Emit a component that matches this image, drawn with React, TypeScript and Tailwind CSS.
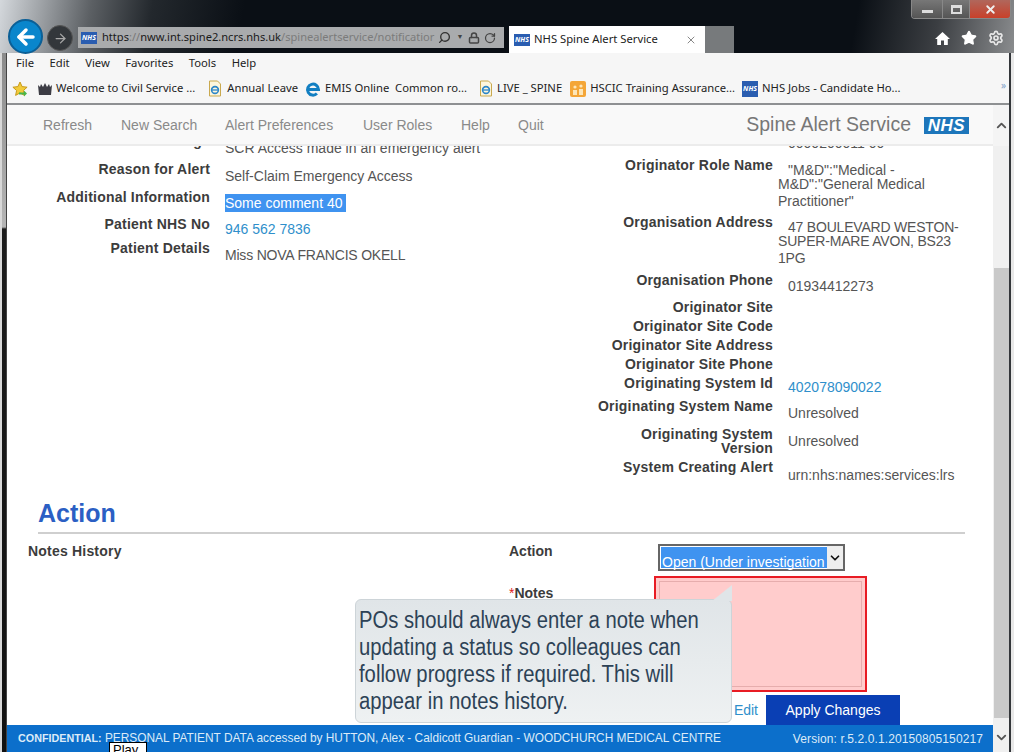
import { Star, Settings, Lock, RotateCw, Search, ChevronUp, ChevronDown, X, ArrowLeft, ArrowRight } from 'lucide-react';

const NAV = [
  { label: 'Refresh', cls: 'w-[78px]' },
  { label: 'New Search', cls: 'w-[104px]' },
  { label: 'Alert Preferences', cls: 'w-[138px]' },
  { label: 'User Roles', cls: 'w-[98px]' },
  { label: 'Help', cls: 'w-[57px]' },
  { label: 'Quit', cls: 'w-[40px]' },
];

function NhsIcon({ className }: { className: string }) {
  return (
    <span className={`flex h-[12px] items-center justify-center bg-[#2a5db0] text-[7px] font-bold italic leading-none text-white ${className}`}>
      NHS
    </span>
  );
}

function PageIcon() {
  return (
    <svg width="16" height="17" viewBox="0 0 16 17" className="shrink-0">
      <path d="M2.5 1h8l3 3v12h-11z" fill="#fdf6dc" stroke="#c9a94f" />
      <circle cx="8" cy="10" r="3.4" fill="none" stroke="#2c86c9" strokeWidth="1.6" />
      <path d="M4.5 10h7" stroke="#2c86c9" strokeWidth="1.3" />
    </svg>
  );
}

function Label({ children }: { children: React.ReactNode }) {
  return <div className="text-right text-[14px] font-bold leading-[14px] tracking-[0.2px] text-[#3c3c3c]">{children}</div>;
}

function LeftRow({ label, rowCls, valueCls, children }: { label: string; rowCls: string; valueCls: string; children: React.ReactNode }) {
  return (
    <div className={`flex ${rowCls}`}>
      <div className="w-[203px] shrink-0">
        <Label>{label}</Label>
      </div>
      <div className={`ml-[15px] text-[14px] leading-[14px] text-[#555] ${valueCls}`}>{children}</div>
    </div>
  );
}

function RightRow({ label, rowCls, valueCls, children }: { label: React.ReactNode; rowCls: string; valueCls?: string; children?: React.ReactNode }) {
  return (
    <div className={`flex ${rowCls}`}>
      <div className="w-[213px] shrink-0">
        <Label>{label}</Label>
      </div>
      <div className={`ml-[5px] w-[200px] text-[14px] leading-[14px] text-[#555] ${valueCls ?? ''}`}>{children}</div>
    </div>
  );
}

export default function App() {
  return (
    <div className="relative flex h-[752px] w-[1014px] flex-col overflow-hidden bg-white font-['Liberation_Sans',sans-serif]">
      {/* IE title bar and tabs */}
      <div className="relative flex h-[53px] shrink-0 items-end bg-[linear-gradient(100deg,#d4d8dc_0%,#a0a4a8_4%,#5c6064_9%,#23282d_15%,#0a0f15_24%,#0a0f15_84%,#3b3e42_92%,#8a8c8e_100%)] pl-[8px] font-['Noto_Sans',sans-serif]">
        <div className="mb-[-1px] flex h-[35px] w-[35px] shrink-0 items-center justify-center rounded-full border-2 border-[#0b5f96] bg-[#0a86cc]">
          <ArrowLeft size={24} strokeWidth={3.5} color="#fff" />
        </div>
        <div className="mb-[2px] ml-[4px] flex h-[26px] w-[26px] shrink-0 items-center justify-center rounded-full border border-[#555] bg-[#33373b]">
          <ArrowRight size={15} strokeWidth={2} color="#a8a8a8" />
        </div>
        <div className="mb-[5px] ml-[5px] flex h-[21px] w-[426px] shrink-0 items-center bg-[#a9abad] pl-[3px] text-[11.1px] text-[#1a1a1a]">
          <NhsIcon className="w-[16px] shrink-0" />
          <span className="ml-[5px] whitespace-nowrap">
            https<span className="text-[#777]">://</span>nww.int.spine2.ncrs.nhs.uk<span className="text-[#7b7b7b]">/spinealertservice/notificatior</span>
          </span>
          <Search size={13} strokeWidth={2.5} color="#333" className="ml-[4px] shrink-0 -scale-x-100" />
          <span className="ml-[5px] text-[7px] text-[#444]">▼</span>
          <Lock size={12} strokeWidth={3} color="#444" className="ml-[5px] shrink-0" />
          <RotateCw size={12} strokeWidth={2.5} color="#444" className="ml-[4px] shrink-0" />
        </div>
        <div className="ml-[5px] flex h-[27px] w-[196px] shrink-0 items-center bg-white pl-[5px] pr-[8px] text-[11.25px] text-[#222]">
          <NhsIcon className="w-[16px] shrink-0" />
          <span className="ml-[4px] flex-1 whitespace-nowrap">NHS Spine Alert Service</span>
          <X size={12} color="#888" />
        </div>
        <div className="h-[27px] w-[29px] shrink-0 bg-[#777a7c]" />
        <div className="mb-[7px] ml-auto mr-[10px] flex items-center gap-[11px]">
          <svg width="15" height="15" viewBox="0 0 15 15">
            <path d="M7.5 1 L15 8 H12.8 V14 H9 V9.5 H6 V14 H2.2 V8 H0 Z" fill="#fff" />
          </svg>
          <Star size={16} fill="#fff" color="#fff" />
          <Settings size={16} color="#e8e8e8" strokeWidth={2.5} />
        </div>
        {/* window buttons */}
        <div className="absolute right-[3px] top-0 flex h-[19px] w-[100px] overflow-hidden rounded-b-[4px] border border-t-0 border-[#888]">
          <div className="flex w-[30px] items-center justify-center bg-[linear-gradient(#777,#555)]">
            <span className="mt-[5px] h-[3px] w-[11px] bg-[#ddd]" />
          </div>
          <div className="flex w-[27px] items-center justify-center border-l border-[#888] bg-[linear-gradient(#777,#555)]">
            <span className="h-[9px] w-[11px] border-2 border-t-[3px] border-[#ddd]" />
          </div>
          <div className="flex flex-1 items-center justify-center border-l border-[#888] bg-[linear-gradient(#b0675c,#c8402a)]">
            <X size={13} strokeWidth={3.5} color="#eee" />
          </div>
        </div>
      </div>

      <div className="flex min-h-0 flex-1">
        {/* window edge, left */}
        <div className="w-[7px] shrink-0 border-l-2 border-r border-l-[#d8d8d8] border-r-[#444] bg-[linear-gradient(#8b8b8b_0,#b5b5b5_174px,#1c1c1c_176px,#111_100%)]" />
        <div className="flex min-w-0 flex-1 flex-col bg-white">
          {/* menu and favourites */}
          <div className="border-b-2 border-[#8e9092] bg-[#f6f6f6] font-['Noto_Sans',sans-serif] text-[11.25px] text-[#222]">
            <div className="flex h-[25px] items-center gap-[15.5px] pb-[4px] pl-[9px]">
              <span>File</span>
              <span>Edit</span>
              <span>View</span>
              <span>Favorites</span>
              <span>Tools</span>
              <span>Help</span>
            </div>
            <div className="flex h-[25px] items-center whitespace-nowrap pb-[4px] pl-[5px]">
              <svg width="16" height="16" viewBox="0 0 16 16" className="shrink-0">
                <path d="M8 1l2.1 4.6 5 .6-3.7 3.3 1 4.9L8 11.9l-4.4 2.5 1-4.9L.9 6.2l5-.6z" fill="#f2cb3a" stroke="#c79a1c" />
                <path d="M7 11.5h5V9.5l3 3-3 3v-2H7z" fill="#49b64a" />
              </svg>
              <svg width="16" height="14" viewBox="0 0 16 14" className="ml-[9px] shrink-0">
                <path d="M1 3l2 2 1-3 2 3 2-4 2 4 2-3 1 3 2-2-1 10H2z" fill="#3c3c44" />
              </svg>
              <span className="ml-[3px]">Welcome to Civil Service ...</span>
              <span className="ml-[12px]"><PageIcon /></span>
              <span className="ml-[4px]">Annual Leave</span>
              <svg width="18" height="18" viewBox="0 0 18 18" className="ml-[6px] shrink-0">
                <path d="M3.5 9.5h11a5.5 5.5 0 1 0-1.6 4" fill="none" stroke="#127fc2" strokeWidth="3" />
              </svg>
              <span className="ml-[3px]">EMIS Online&nbsp; Common ro...</span>
              <span className="ml-[11px]"><PageIcon /></span>
              <span className="ml-[3px]">LIVE _ SPINE</span>
              <svg width="16" height="16" viewBox="0 0 16 16" className="ml-[8px] shrink-0">
                <rect width="16" height="16" rx="2" fill="#f4a638" />
                <circle cx="5" cy="6" r="1.6" fill="#fde6b8" />
                <circle cx="11" cy="5" r="1.6" fill="#fde6b8" />
                <rect x="3" y="9" width="4" height="5" fill="#fde6b8" />
                <rect x="9" y="8" width="4" height="6" fill="#fde6b8" />
              </svg>
              <span className="ml-[4px]">HSCIC Training Assurance...</span>
              <NhsIcon className="ml-[7px] h-[16px] w-[16px] shrink-0 bg-[#0f62ad]" />
              <span className="ml-[4px]">NHS Jobs - Candidate Ho...</span>
              <span className="ml-auto mr-[3px] mt-[-6px] text-[10px] text-[#7f9fc6]">»</span>
            </div>
          </div>

          <div className="flex min-h-0 flex-1">
            <div className="relative flex min-w-0 flex-1 flex-col">
              {/* app nav */}
              <div className="z-10 flex h-[41px] shrink-0 items-center border-b-2 border-[#ececec] bg-[#f9f9f9] pl-[36px] pt-[1px] text-[14px] text-[#8a8a8a]">
                {NAV.map((n) => (
                  <span key={n.label} className={n.cls}>{n.label}</span>
                ))}
                <span className="ml-auto text-[19.5px] text-[#777]">Spine Alert Service</span>
                <span className="ml-[13px] mr-[24px] flex h-[17px] w-[45px] items-center justify-center bg-[#1d76bb] text-[17px] font-bold italic leading-none tracking-[0.5px] text-white">NHS</span>
              </div>

              <div className="min-h-0 flex-1 overflow-hidden">
                <div className="mt-[-12px] flex">
                  {/* left details */}
                  <div className="w-[553px] shrink-0">
                    <LeftRow label="Alert Message" rowCls="h-[28px]" valueCls="pt-[7px]">SCR Access made in an emergency alert</LeftRow>
                    <LeftRow label="Reason for Alert" rowCls="h-[28px]" valueCls="pt-[7px]">Self-Claim Emergency Access</LeftRow>
                    <LeftRow label="Additional Information" rowCls="h-[27px]" valueCls="pt-[6px]">
                      <span className="bg-[#3f93f0] py-[1px] pr-[3px] text-white">Some comment 40</span>
                    </LeftRow>
                    <LeftRow label="Patient NHS No" rowCls="h-[24px]" valueCls="pt-[5px]">
                      <span className="text-[#2f8fcb]">946 562 7836</span>
                    </LeftRow>
                    <LeftRow label="Patient Details" rowCls="h-[24px]" valueCls="pt-[7px] tracking-[-0.2px]">Miss NOVA FRANCIS OKELL</LeftRow>
                  </div>
                  {/* right details */}
                  <div className="w-[420px] shrink-0">
                    <RightRow label="" rowCls="h-[24px]" valueCls="pt-[2px] pl-[10px]">0000200011 00</RightRow>
                    <RightRow label="Originator Role Name" rowCls="h-[57px]" valueCls="pt-[5px]">
                      <div className="pl-[10px]">"M&amp;D":"Medical -</div>
                      <div>M&amp;D":"General Medical</div>
                      <div className="mt-[3px]">Practitioner"</div>
                    </RightRow>
                    <RightRow label="Organisation Address" rowCls="h-[58px]" valueCls="pt-[5px] tracking-[-0.2px]">
                      <div className="pl-[10px]">47 BOULEVARD WESTON-</div>
                      <div>SUPER-MARE AVON, BS23</div>
                      <div className="mt-[3px]">1PG</div>
                    </RightRow>
                    <RightRow label="Organisation Phone" rowCls="h-[27px]" valueCls="pl-[10px] pt-[6px]">01934412273</RightRow>
                    <RightRow label="Originator Site" rowCls="h-[19px]" />
                    <RightRow label="Originator Site Code" rowCls="h-[19px]" />
                    <RightRow label="Originator Site Address" rowCls="h-[19px]" />
                    <RightRow label="Originator Site Phone" rowCls="h-[19px]" />
                    <RightRow label="Originating System Id" rowCls="h-[23px]" valueCls="pl-[10px] pt-[4px]">
                      <span className="text-[#2f8fcb]">402078090022</span>
                    </RightRow>
                    <RightRow label="Originating System Name" rowCls="h-[28px]" valueCls="pl-[10px] pt-[7px]">Unresolved</RightRow>
                    <RightRow label={<>Originating System<br />Version</>} rowCls="h-[33px]" valueCls="pl-[10px] pt-[7px]">Unresolved</RightRow>
                    <RightRow label="System Creating Alert" rowCls="h-[38px]" valueCls="pl-[10px] pt-[8px]">urn:nhs:names:services:lrs</RightRow>
                  </div>
                </div>

                {/* action form */}
                <div className="ml-[31px] mr-[28px] h-[36px] border-b-2 border-[#cfcfcf] text-[25px] font-bold leading-[30px] text-[#2b5fc4]">Action</div>
                <div className="flex">
                  <div className="w-[502px] shrink-0 pl-[21px] pt-[10px]">
                    <Label><span className="block text-left">Notes History</span></Label>
                  </div>
                  <div className="flex flex-1 flex-col">
                    <div className="flex">
                      <div className="w-[149px] shrink-0 pt-[10px] text-[14px] font-bold leading-[14px] text-[#3c3c3c]">Action</div>
                      <div className="mt-[10px] flex h-[27px] w-[187px] items-stretch border-2 border-[#666] bg-white">
                        <span className="my-[1px] ml-[1px] flex-1 whitespace-nowrap bg-[#3f93f0] pl-[1px] pt-[8px] text-[14px] leading-[14px] text-white">Open (Under investigation</span>
                        <span className="flex w-[16px] items-center justify-center bg-[#eee]"><ChevronDown size={14} strokeWidth={3} color="#111" /></span>
                      </div>
                    </div>
                    <div className="flex">
                      <div className="w-[145px] shrink-0 pt-[15px] text-[14px] font-bold leading-[14px] text-[#3c3c3c]">
                        <span className="font-normal text-[#e02020]">*</span>Notes
                      </div>
                      <div className="mt-[5px] h-[116px] w-[213px] border-2 border-[#e81c24] bg-[#ffcccc] p-[3px]">
                        <div className="h-full w-full border border-[#e6adad]" />
                      </div>
                    </div>
                    <div className="mt-[3px] flex h-[30px] w-[391px] items-center justify-end">
                      <span className="mr-[8px] text-[14px] text-[#2f8fcb]">Edit</span>
                      <span className="flex h-[30px] w-[134px] items-center justify-center bg-[#0a3fb4] text-[14px] text-white">Apply Changes</span>
                    </div>
                  </div>
                </div>
              </div>

              {/* footer */}
              <div className="flex h-[27px] shrink-0 items-center justify-between bg-[#0c6fcb] pl-[11px] pr-[10px] pt-[1px] text-[12px] text-[#dcebf8]">
                <span className="text-[11.88px]"><b className="text-[10.75px]">CONFIDENTIAL:</b> PERSONAL PATIENT DATA accessed by HUTTON, Alex - Caldicott Guardian - WOODCHURCH MEDICAL CENTRE</span>
                <span className="tracking-[0.1px]">Version: r.5.2.0.1.20150805150217</span>
              </div>
            </div>

            {/* scrollbar */}
            <div className="flex w-[16px] shrink-0 flex-col bg-[#f0f0f0]">
              <div className="flex h-[41px] items-center justify-center bg-[#f4f4f4]"><ChevronUp size={15} strokeWidth={3} color="#555" /></div>
              <div className="ml-[1px] mt-[122px] h-[450px] bg-[#c9c9c9]" />
              <div className="mt-auto flex h-[30px] items-center justify-center"><ChevronDown size={15} strokeWidth={3} color="#555" /></div>
            </div>
          </div>
        </div>
        {/* window edge, right */}
        <div className="flex w-[5px] shrink-0">
          <div className="w-[2px] bg-[#33363a]" />
          <div className="flex-1 bg-[#e8e8e8]" />
        </div>
      </div>

      {/* captivate caption */}
      <div className="absolute left-[355px] top-[599px] h-[124px] w-[377px] rounded-[6px] border border-[#cdd4d8] bg-[linear-gradient(#e0e5e8,#eef1f2)] px-[3px] pt-[7px] text-[#2d4256]">
        <svg width="20" height="16" viewBox="0 0 20 16" className="absolute right-[-1px] top-[-15px]">
          <path d="M0 16 L20 0 V16 Z" fill="#e0e5e8" />
        </svg>
        <div className="origin-left scale-x-[0.88] whitespace-nowrap text-[23px] leading-[27px]">
          POs should always enter a note when<br />
          updating a status so colleagues can<br />
          follow progress if required. This will<br />
          appear in notes history.
        </div>
      </div>
      <div className="absolute left-[109px] top-[742px] h-[14px] w-[38px] border border-black bg-white pl-[3px] text-[13px] leading-[14px] text-black">Play</div>
    </div>
  );
}
